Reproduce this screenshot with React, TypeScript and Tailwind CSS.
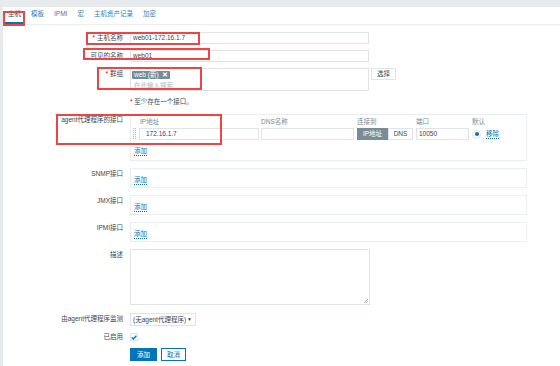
import React from 'react'

const tabs = ['主机', '模板', 'IPMI', '宏', '主机资产记录', '加密']

function Label({ children, req }: { children: React.ReactNode; req?: boolean }) {
    return (
        <div className="w-[121px] shrink-0 text-right leading-[12px] pr-[1px]">
            {req && <span className="text-[#d40000] mr-[2px]">*</span>}
            {children}
        </div>
    )
}

function AddLink() {
    return <span className="text-[#0275b8] border-b border-dotted border-[#0275b8] leading-[8px] inline-block">添加</span>
}

function IfacePanel({ label }: { label: string }) {
    return (
        <div className="flex gap-x-[6px]">
            <Label>{label}</Label>
            <div className="w-[397px] h-[20px] border border-[#ebeef0] pl-[3px] pt-[6px]">
                <AddLink />
            </div>
        </div>
    )
}

function RedBox({ className }: { className: string }) {
    return <div className={'absolute border-2 border-[#ef4444] ' + className} />
}

export default function App() {
    return (
        <div className="relative w-[560px] h-[366px] overflow-hidden bg-white text-[6.5px] text-[#3a474e] font-['Liberation_Sans','Noto_Sans_CJK_SC',sans-serif]">
            <div className="h-[7px] bg-[#e8ebed]" />
            <div className="flex h-[359px]">
                <div className="w-[3px] bg-[#e8ebed]" />
                <div className="flex-1 flex flex-col">
                    {/* tabs */}
                    <div className="h-[18px] flex items-end gap-[4px] pl-[2px] border-b border-[#ebeef0]">
                        {tabs.map((t, i) => (
                            <div
                                key={t}
                                className={
                                    i === 0
                                        ? 'px-[3px] h-[17px] leading-[14px] text-[#3a474e] border-b-2 border-[#0275b8]'
                                        : 'px-[3px] h-[17px] leading-[14px] text-[#2f7fb8]'
                                }
                            >
                                {t}
                            </div>
                        ))}
                    </div>

                    <div className="flex flex-col pt-[7px]">
                        <div className="flex gap-x-[6px]">
                            <Label req>主机名称</Label>
                            <div className="w-[239px] h-[12px] border border-[#dfe4e7] px-[2px] leading-[10px]">web01-172.16.1.7</div>
                        </div>

                        <div className="flex gap-x-[6px] mt-[6px]">
                            <Label>可见的名称</Label>
                            <div className="w-[239px] h-[12px] border border-[#dfe4e7] px-[2px] leading-[10px]">web01</div>
                        </div>

                        <div className="flex gap-x-[6px] mt-[6px]">
                            <Label req>群组</Label>
                            <div className="w-[239px] h-[23px] border border-[#dfe4e7] px-[1px] pt-[1px]">
                                <div className="inline-flex items-center gap-[3px] h-[8px] bg-[#768d99] text-white px-[2px] leading-[8px] rounded-[1px]">
                                    <span>web (新)</span>
                                    <span className="font-bold text-[7px]">✕</span>
                                </div>
                                <div className="text-[#acbbc2] leading-[9px] mt-[1px] pl-[2px]">在此输入搜索</div>
                            </div>
                            <div className="-ml-[4px] h-[12px] px-[5px] border border-[#dfe4e7] leading-[10px] bg-white">选择</div>
                        </div>

                        <div className="flex gap-x-[6px] mt-[6px]">
                            <div className="w-[121px]" />
                            <div className="leading-[9px]">
                                <span className="text-[#d40000]">*</span> 至少存在一个接口。
                            </div>
                        </div>

                        {/* agent interface */}
                        <div className="flex gap-x-[6px] mt-[8px]">
                            <Label>agent代理程序的接口</Label>
                            <div className="w-[397px] h-[47px] border border-[#ebeef0] pl-[2px] pt-[3px]">
                                <div className="flex text-[#768d99] leading-[8px]">
                                    <div className="w-[6px]" />
                                    <div className="w-[120px] pl-[1px]">IP地址</div>
                                    <div className="w-[93px] ml-[2px]">DNS名称</div>
                                    <div className="w-[56px] ml-[3px]">连接到</div>
                                    <div className="w-[53px] ml-[3px]">端口</div>
                                    <div className="ml-[3px]">默认</div>
                                </div>
                                <div className="flex items-center mt-[2px]">
                                    <svg width="6" height="12" viewBox="0 0 6 12">
                                        {[1, 3, 5, 7, 9, 11].map((y) => (
                                            <g key={y}>
                                                <rect x="0" y={y - 1} width="1" height="1" fill="#acbbc2" />
                                                <rect x="2" y={y - 1} width="1" height="1" fill="#acbbc2" />
                                            </g>
                                        ))}
                                    </svg>
                                    <div className="w-[120px] h-[12px] border border-[#dfe4e7] px-[6px] leading-[10px]">172.16.1.7</div>
                                    <div className="w-[93px] h-[12px] ml-[2px] border border-[#dfe4e7]" />
                                    <div className="flex ml-[3px] h-[12px] leading-[12px]">
                                        <div className="w-[31px] bg-[#768d99] text-white text-center">IP地址</div>
                                        <div className="w-[25px] border border-[#dfe4e7] text-center leading-[10px]">DNS</div>
                                    </div>
                                    <div className="w-[53px] h-[12px] ml-[3px] border border-[#dfe4e7] px-[2px] leading-[10px]">10050</div>
                                    <div className="ml-[3px] w-[9px] h-[9px] rounded-full border border-[#dfe4e7] flex items-center justify-center">
                                        <div className="w-[4px] h-[4px] rounded-full bg-[#0275b8]" />
                                    </div>
                                    <div className="ml-[5px]">
                                        <span className="text-[#0275b8] border-b border-dotted border-[#0275b8] leading-[8px] inline-block">移除</span>
                                    </div>
                                </div>
                                <div className="mt-[6px] pl-[1px]">
                                    <AddLink />
                                </div>
                            </div>
                        </div>

                        <div className="mt-[7px]"><IfacePanel label="SNMP接口" /></div>
                        <div className="mt-[7px]"><IfacePanel label="JMX接口" /></div>
                        <div className="mt-[7px]"><IfacePanel label="IPMI接口" /></div>

                        <div className="flex gap-x-[6px] mt-[7px]">
                            <Label>描述</Label>
                            <div className="relative w-[240px] h-[56px] border border-[#dfe4e7]">
                                <svg className="absolute right-[1px] bottom-[1px]" width="4" height="4" viewBox="0 0 4 4">
                                    <path d="M4 0 L0 4 M4 2 L2 4" stroke="#9aa5ab" strokeWidth="0.8" />
                                </svg>
                            </div>
                        </div>

                        <div className="flex gap-x-[6px] mt-[8px]">
                            <Label>由agent代理程序监测</Label>
                            <div className="w-[66px] h-[13px] border border-[#dfe4e7] pl-[2px] pr-[3px] flex items-center justify-between">
                                <span>(无agent代理程序)</span>
                                <span className="text-[5px]">▼</span>
                            </div>
                        </div>

                        <div className="flex gap-x-[6px] mt-[7px] items-center">
                            <div className="w-[121px] text-right leading-[8px] pr-[1px]">已启用</div>
                            <div className="w-[8px] h-[8px] border border-[#dfe4e7] flex items-center justify-center">
                                <svg width="6" height="5" viewBox="0 0 6 5">
                                    <path d="M0.6 2.4 L2.3 4 L5.4 0.8" fill="none" stroke="#0275b8" strokeWidth="1.3" />
                                </svg>
                            </div>
                        </div>

                        <div className="flex gap-x-[6px] mt-[7px]">
                            <div className="w-[121px]" />
                            <div className="w-[27px] h-[13px] bg-[#0275b8] text-white text-center leading-[13px]">添加</div>
                            <div className="-ml-[2px] w-[25px] h-[13px] border border-[#0275b8] text-[#0275b8] text-center leading-[11px]">取消</div>
                        </div>
                    </div>
                </div>
            </div>

            {/* annotation boxes */}
            <RedBox className="left-[3px] top-[11px] w-[22px] h-[15px]" />
            <RedBox className="left-[86px] top-[32px] w-[114px] h-[13px]" />
            <RedBox className="left-[83px] top-[48px] w-[127px] h-[12px]" />
            <RedBox className="left-[97px] top-[67px] w-[105px] h-[23px]" />
            <RedBox className="left-[56px] top-[114px] w-[166px] h-[31px]" />
        </div>
    )
}
